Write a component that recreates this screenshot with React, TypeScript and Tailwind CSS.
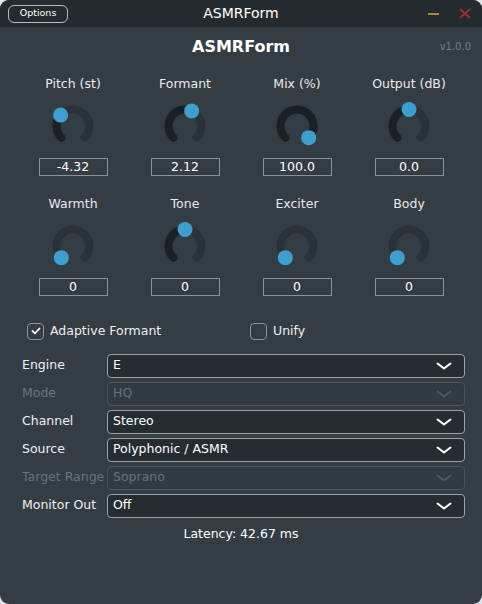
import React from 'react';

interface KnobProps {
    label: string;
    value: string;
    // position 0..1 along the 270° sweep
    pos: number;
}

const FONT = {fontFamily: '"DejaVu Sans", Verdana, sans-serif'};

function polar(cx: number, cy: number, r: number, deg: number) {
    const a = (deg - 90) * Math.PI / 180;
    return {x: cx + r * Math.cos(a), y: cy + r * Math.sin(a)};
}

function arcPath(cx: number, cy: number, r: number, from: number, to: number) {
    const s = polar(cx, cy, r, from);
    const e = polar(cx, cy, r, to);
    const large = to - from > 180 ? 1 : 0;
    return `M ${s.x} ${s.y} A ${r} ${r} 0 ${large} 1 ${e.x} ${e.y}`;
}

function Knob({label, value, pos}: KnobProps) {
    const angle = -135 + pos * 270;
    const thumb = polar(24, 24, 16.5, angle);
    return (
        <div className="flex flex-col items-center">
            <div className="h-4 text-[12.5px] leading-4 text-[#e8eaec]">{label}</div>
            <svg width="48" height="48" viewBox="0 0 48 48" className="mt-[10px]">
                <path d={arcPath(24, 24, 16.5, -135, 135)} stroke="#2a3237" strokeWidth="8" fill="none" strokeLinecap="round" />
                {pos > 0.001 && (
                    <path d={arcPath(24, 24, 16.5, -135, angle)} stroke="#1a2024" strokeWidth="8" fill="none" strokeLinecap="round" />
                )}
                <circle cx={thumb.x} cy={thumb.y} r="7.5" fill="#3d9fcf" />
            </svg>
            <div className="mt-[8px] flex h-[18px] w-[69px] items-center justify-center border border-[#8a9197] text-[12.5px] text-white">
                {value}
            </div>
        </div>
    );
}

function Chevron({dim}: {dim?: boolean}) {
    return (
        <svg width="16" height="8" viewBox="0 0 16 8">
            <polyline points="1.5,1.5 8,6.5 14.5,1.5" fill="none" stroke={dim ? '#4f585e' : '#ffffff'} strokeWidth="2" strokeLinecap="round" strokeLinejoin="round" />
        </svg>
    );
}

function SelectRow({label, value, disabled}: {label: string; value: string; disabled?: boolean}) {
    return (
        <div className="grid h-6 grid-cols-[85px_1fr] items-center">
            <div className={`text-[12.5px] ${disabled ? 'text-[#6b747a]' : 'text-[#eef0f1]'}`}>{label}</div>
            <div
                className={`flex h-6 items-center justify-between rounded-[4px] border pl-[5px] pr-[12px] text-[12.5px] ${
                    disabled ? 'border-[#4b545a] bg-[#323b41] text-[#687177]' : 'border-[#9aa1a6] bg-[#262d32] text-white'
                }`}
            >
                <span>{value}</span>
                <Chevron dim={disabled} />
            </div>
        </div>
    );
}

function Checkbox({label, checked}: {label: string; checked?: boolean}) {
    return (
        <div className="flex items-center gap-[6px]">
            <div className="flex h-[17px] w-[17px] items-center justify-center rounded-[4px] border border-[#8c949a]">
                {checked && (
                    <svg width="10" height="8" viewBox="0 0 10 8">
                        <polyline points="1.5,4 4,6.3 8.5,1.5" fill="none" stroke="#ffffff" strokeWidth="1.8" strokeLinecap="round" strokeLinejoin="round" />
                    </svg>
                )}
            </div>
            <span className="text-[12.5px] text-[#eef0f1]">{label}</span>
        </div>
    );
}

export default function App() {
    const knobsTop: KnobProps[] = [
        {label: 'Pitch (st)', value: '-4.32', pos: 0.32},
        {label: 'Formant', value: '2.12', pos: 0.588},
        {label: 'Mix (%)', value: '100.0', pos: 1},
        {label: 'Output (dB)', value: '0.0', pos: 0.5},
    ];
    const knobsBottom: KnobProps[] = [
        {label: 'Warmth', value: '0', pos: 0},
        {label: 'Tone', value: '0', pos: 0.5},
        {label: 'Exciter', value: '0', pos: 0},
        {label: 'Body', value: '0', pos: 0},
    ];

    return (
        <div className="h-[604px] w-[482px] bg-[#dfe3e6]" style={FONT}>
            <div className="flex h-full w-full flex-col overflow-hidden rounded-[9px] bg-[#343d44]">
                {/* Barre de titre */}
                <div className="grid h-[27px] grid-cols-[1fr_auto_1fr] items-center bg-[#242b30] px-2">
                    <div>
                        <button className="flex h-[18px] w-[60px] items-center justify-center rounded-[6px] border border-[#b4babe] text-[9.5px] text-white">
                            Options
                        </button>
                    </div>
                    <div className="text-[14px] text-white">ASMRForm</div>
                    <div className="flex items-center justify-end gap-[20px] pr-[3px]">
                        <div className="h-[2px] w-[11px] bg-[#a08c3a]" />
                        <svg width="12" height="11" viewBox="0 0 12 11">
                            <path d="M1 1 L11 10 M11 1 L1 10" stroke="#9f2a30" strokeWidth="2" />
                        </svg>
                    </div>
                </div>

                {/* En-tête */}
                <div className="grid h-[39px] grid-cols-[1fr_auto_1fr] items-center px-[11px]">
                    <div />
                    <div className="text-[16px] font-bold text-white">ASMRForm</div>
                    <div className="text-right text-[10px] text-[#737b80]">v1.0.0</div>
                </div>

                {/* Potentiomètres */}
                <div className="mt-[10px] grid grid-cols-4 px-[17px]">
                    {knobsTop.map((k) => (
                        <Knob key={k.label} {...k} />
                    ))}
                </div>
                <div className="mt-[20px] grid grid-cols-4 px-[17px]">
                    {knobsBottom.map((k) => (
                        <Knob key={k.label} {...k} />
                    ))}
                </div>

                {/* Cases à cocher */}
                <div className="mt-[26px] grid grid-cols-[223px_1fr] pl-[27px]">
                    <Checkbox label="Adaptive Formant" checked />
                    <Checkbox label="Unify" />
                </div>

                {/* Listes déroulantes */}
                <div className="mt-[13px] flex flex-col gap-1 pl-[22px] pr-[17px]">
                    <SelectRow label="Engine" value="E" />
                    <SelectRow label="Mode" value="HQ" disabled />
                    <SelectRow label="Channel" value="Stereo" />
                    <SelectRow label="Source" value="Polyphonic / ASMR" />
                    <SelectRow label="Target Range" value="Soprano" disabled />
                    <SelectRow label="Monitor Out" value="Off" />
                </div>

                <div className="mt-[7px] text-center text-[12.5px] text-white">Latency: 42.67 ms</div>
            </div>
        </div>
    );
}
